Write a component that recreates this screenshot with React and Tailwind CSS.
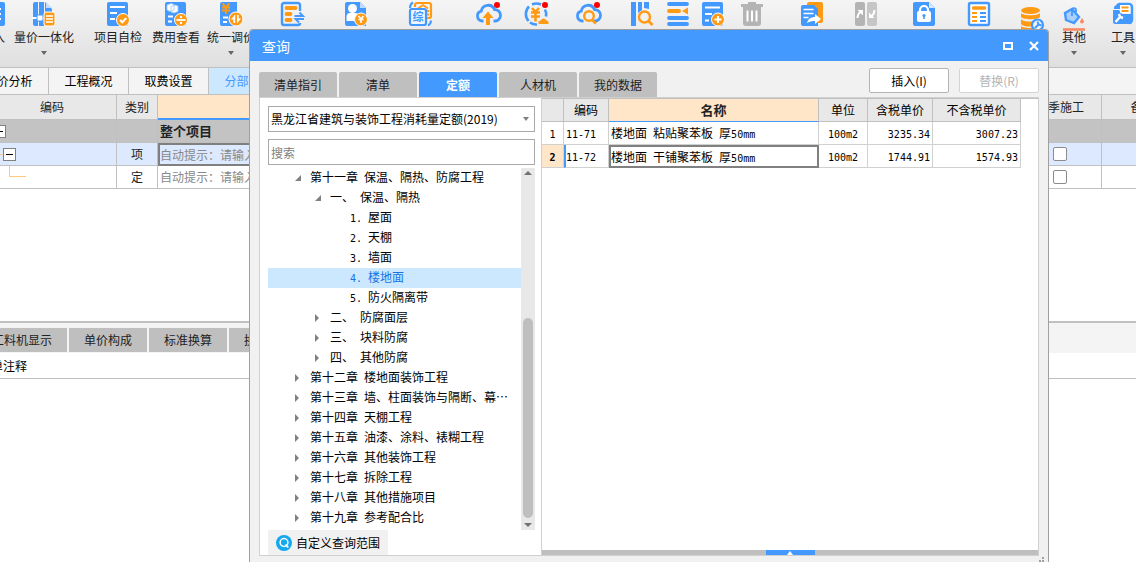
import React, { useState } from 'react';
import clsx from 'clsx';

const BLUE = '#4499ff';
const ORANGE = '#ff9a15';

/* ---------- toolbar icons ---------- */

function Icon({ children }) {
  return (
    <svg width="24" height="24" viewBox="0 0 24 24" fill="none" className="block shrink-0 overflow-visible" aria-hidden="true">
      {children}
    </svg>
  );
}

const Cloud = () => (
  <path d="M7.5 19H6a5 5 0 0 1-.8-9.800A7 7 0 0 1 18.600 7.600 5.700 5.700 0 0 1 19 19h-1.500" stroke={BLUE} strokeWidth="2.800" />
);
const RedDot = () => <circle cx="21" cy="3" r="3" fill="#f00" />;

const icons = {
  import: (
    <Icon>
      <rect x="2" width="22" height="24" rx="2" fill={BLUE} />
      <path d="M15 7h5M15 12h5M15 17h5" stroke="#fff" strokeWidth="2" />
    </Icon>
  ),
  integrate: (
    <Icon>
      <path d="M1 2a2 2 0 0 1 2-2h3v24H3a2 2 0 0 1-2-2zM7 0h5v24H7z" fill={BLUE} />
      <path d="M13 0l7 7v3h-7z" fill={BLUE} />
      <path d="M14 0l6 6h-6z" fill="#bfdcff" />
      <path d="M0 16h13" stroke="#fff" strokeWidth="2" />
      <rect x="5" y="13" width="6" height="6" fill="#fff" stroke={BLUE} />
      <rect x="12" y="10" width="11" height="14" rx="2" fill={ORANGE} stroke="#fff" />
      <path d="M14 14h7M14 17h7M14 20h7" stroke="#fff" strokeWidth="1.5" />
    </Icon>
  ),
  check: (
    <Icon>
      <rect x="1" width="21" height="24" rx="2" fill={BLUE} />
      <path d="M4 5h15M4 11h7M4 17h5" stroke="#fff" strokeWidth="2" />
      <circle cx="17" cy="18" r="6.500" fill={ORANGE} stroke="#fff" />
      <path d="M14 18l2.300 2.300 4-4.300" stroke="#fff" strokeWidth="2" />
    </Icon>
  ),
  fee: (
    <Icon>
      <rect x="1" width="21" height="24" rx="2" fill={BLUE} />
      <path d="M3 3l4-1.500 3 1V8L6 9.500 3 8zM7 4.500l4-1.500 3 1v5.500L10 11l-3-1z" fill="#fff" stroke="#9cc9ff" strokeWidth=".8" />
      <path d="M4 14.500h5M4 19.500h4" stroke="#fff" strokeWidth="2" />
      <circle cx="17" cy="18" r="6.500" fill={ORANGE} stroke="#fff" />
      <path d="M12.500 18h9" stroke="#fff" strokeWidth="1.800" />
      <circle cx="17" cy="15" r="1.200" fill="#fff" />
      <circle cx="17" cy="21" r="1.200" fill="#fff" />
    </Icon>
  ),
  adjust: (
    <Icon>
      <path d="M1 2a2 2 0 0 1 2-2h15v24H3a2 2 0 0 1-2-2z" fill={BLUE} />
      <path d="M3.500 1.500L7 5.500l3.500-4M3 5.500h8M3 8.500h8M7 5v7" stroke={ORANGE} strokeWidth="1.900" />
      <path d="M4 15.500h5M4 20h4" stroke="#fff" strokeWidth="1.800" />
      <circle cx="17" cy="17" r="7" fill={ORANGE} stroke="#fff" />
      <path d="M16.200 12.500v8.500h-1.700v-3.500H12zM18 21.500V13h1.700v3.500H22z" fill="#fff" />
    </Icon>
  ),
  convert: (
    <Icon>
      <path d="M20 9V3a2 2 0 0 0-2-2H4a2 2 0 0 0-2 2v18a2 2 0 0 0 2 2h14a2 2 0 0 0 2-2" stroke={BLUE} strokeWidth="2.400" />
      <path d="M6.500 6h9M6.500 12h4M6.500 18h4" stroke={ORANGE} strokeWidth="3.800" strokeLinecap="round" />
      <path d="M14 10h10v9H14z" fill="#efefef" />
      <path d="M14.500 14h8.500l-3.500-3.500M24 17h-8.500l3.500 3.500" stroke={BLUE} strokeWidth="1.900" />
    </Icon>
  ),
  person: (
    <Icon>
      <path d="M1 2a2 2 0 0 1 2-2h13l6 6v18H3a2 2 0 0 1-2-2z" fill={BLUE} />
      <path d="M16 0l6 6h-6z" fill="#bfdcff" />
      <circle cx="8.500" cy="6.500" r="4.500" fill="#fff" />
      <path d="M2.500 19v-4.500C2.500 12 4 11 6 11h5c2.500 0 3.500 1.500 3.500 3.500V19z" fill="#fff" />
      <circle cx="17" cy="17.500" r="6.500" fill={ORANGE} stroke="#fff" />
      <path d="M14.500 14l2.500 3 2.500-3M14.500 17.500h5M17 17v4" stroke="#fff" strokeWidth="1.600" />
    </Icon>
  ),
  summary: (
    <Icon>
      <path d="M7 5V3a2 2 0 0 1 2-2h12a2 2 0 0 1 2 2v11a2 2 0 0 1-2 2h-2" stroke={ORANGE} strokeWidth="2.200" />
      <path d="M10 6.500L15 3l5 3.500M19 9h2M19 12.500h2" stroke={ORANGE} strokeWidth="1.800" />
      <path d="M2 6c0-3 1-4.500 3-5.500M20 23.500c2-1 3-2.500 3-5" stroke={BLUE} strokeWidth="2" />
      <rect x="2" y="7" width="16" height="16" rx="2" fill="#eef5ff" stroke={BLUE} strokeWidth="2.200" />
      <text x="10" y="19" textAnchor="middle" fontSize="11" fontWeight="700" fontFamily="'Noto Sans CJK SC', sans-serif" fill={BLUE}>综</text>
    </Icon>
  ),
  upload: (
    <Icon>
      <Cloud />
      <path d="M12 9.500l5.500 6.500h-3.500v7h-4v-7H6.500z" fill={ORANGE} />
      <RedDot />
    </Icon>
  ),
  price: (
    <Icon>
      <path d="M4.500 19A10.500 10.500 0 0 1 5 4.500M8 2.500a10.500 10.500 0 0 1 9 0M21 7.500a10.500 10.500 0 0 1 1 7M6 20.500a10.500 10.500 0 0 0 7 2" stroke={BLUE} strokeWidth="2.600" />
      <path d="M8 6l3.500 4L15 6M7 10.500h9M7 14.500h9M11.500 10v9.500" stroke={ORANGE} strokeWidth="2.600" />
      <path d="M14.500 22v-2.500l2.500-1.500a2.800 2.800 0 0 1 5 0l2.500 1.500V22z" fill={ORANGE} />
      <RedDot />
    </Icon>
  ),
  cloudSearch: (
    <Icon>
      <Cloud />
      <circle cx="13" cy="14" r="4.800" fill="#f1f1f1" stroke={ORANGE} strokeWidth="2.400" />
      <path d="M16 18l4 3.500" stroke={ORANGE} strokeWidth="2.600" />
      <RedDot />
    </Icon>
  ),
  lookup: (
    <Icon>
      <path d="M1 0h5v24H1zM8 0h4v8l-4 3zM14 0h5v7l-5-1z" fill={BLUE} />
      <circle cx="14.500" cy="15" r="5.500" fill="#f1f1f1" stroke={ORANGE} strokeWidth="2.400" />
      <path d="M18.500 19l4 4" stroke={ORANGE} strokeWidth="2.600" />
    </Icon>
  ),
  insertRow: (
    <Icon>
      <path d="M3 2h18M3 16h18M3 22h18" stroke={BLUE} strokeWidth="3.800" strokeLinecap="round" />
      <path d="M3 9h10" stroke={ORANGE} strokeWidth="4" strokeLinecap="round" />
      <path d="M22 5.500v7L16 9z" fill={ORANGE} />
    </Icon>
  ),
  add: (
    <Icon>
      <rect width="21" height="24" rx="2" fill={BLUE} />
      <path d="M3 5.500h15M3 12h7M3 18.500h4" stroke="#fff" strokeWidth="1.800" />
      <circle cx="16" cy="17.500" r="6.500" fill={ORANGE} stroke="#fff" />
      <path d="M12.500 17.500h7M16 14v7" stroke="#fff" strokeWidth="2" />
    </Icon>
  ),
  remove: (
    <Icon>
      <path d="M1 2h7V0h8v2h7v3H1zM3 5h18v16a3 3 0 0 1-3 3H6a3 3 0 0 1-3-3z" fill="#b4b4b4" />
      <path d="M7.500 8.500v11M12 8.500v11M16.500 8.500v11" stroke="#fff" strokeWidth="2" />
    </Icon>
  ),
  copy: (
    <Icon>
      <rect x="7" width="16" height="21" rx="2" fill={ORANGE} />
      <path d="M1 5a2 2 0 0 1 2-2h11l4 4v17H3a2 2 0 0 1-2-2z" fill={BLUE} />
      <path d="M3.500 7.500h10M3.500 11.500h10M3.500 15.500h5" stroke="#fff" strokeWidth="1.600" />
      <path d="M7 21c1-4 4-6 8-6v-3l6 5-6 5v-3c-3 0-5 .5-8 2z" fill="#fff" />
    </Icon>
  ),
  swap: (
    <Icon>
      <rect x="1" width="10" height="24" rx="2" fill="#b4b4b4" />
      <rect x="13" width="10" height="24" rx="2" fill="#c6c6c6" />
      <path d="M3.500 16c0-3 .8-4.500 3-6M20.500 8c0 3-.8 4.500-3 6" stroke="#fff" strokeWidth="2" />
      <path d="M3.500 8H9v5.500zM20.500 16H15v-5.500z" fill="#fff" />
    </Icon>
  ),
  lock: (
    <Icon>
      <path d="M1 2a2 2 0 0 1 2-2h14l6 6v16a2 2 0 0 1-2 2H3a2 2 0 0 1-2-2z" fill={BLUE} />
      <path d="M17 0l6 6h-6z" fill="#d5e8ff" />
      <rect x="5" y="9" width="14" height="11" rx="2" fill="#fff" />
      <path d="M8 10V8a4 4 0 0 1 8 0v2" stroke="#fff" strokeWidth="2.200" />
      <circle cx="12" cy="13.500" r="1.600" fill={BLUE} />
      <path d="M12 13v4" stroke={BLUE} strokeWidth="1.600" />
    </Icon>
  ),
  list: (
    <Icon>
      <rect x="2" y="1" width="20" height="22" rx="1.500" fill="#fff" stroke={BLUE} strokeWidth="2.400" />
      <path d="M6.500 6h11" stroke={ORANGE} strokeWidth="3.600" strokeLinecap="round" />
      <path d="M5 11h5M5 15h5M5 19h5" stroke={ORANGE} strokeWidth="2" />
      <path d="M13 11h6M13 15h6M13 19h6" stroke={BLUE} strokeWidth="2" />
    </Icon>
  ),
  database: (
    <Icon>
      <ellipse cx="10.500" cy="8.500" rx="9.500" ry="3.500" fill={ORANGE} />
      <path d="M1 11c2 3 17 3 19 0v4c-2 3-17 3-19 0zM1 17c2 3 12 3 14 2v5c-4 1-12 1-14-2zM1 24c2 2 8 2 12 2v4H1z" fill={ORANGE} />
      <circle cx="17.500" cy="23" r="5.500" fill="#eef5ff" stroke={BLUE} strokeWidth="2.200" />
      <path d="M15 26l3.500-3.500m-1-3l1 3 3 1" stroke={BLUE} strokeWidth="2" />
    </Icon>
  ),
  paint: (
    <Icon>
      <path d="M3 11l7-4 7 8-5 6-8-3z" fill="#a9d1ff" stroke={BLUE} strokeWidth="2.400" />
      <path d="M10 14V8c0-2.500 4-2.500 4 0v2" stroke={BLUE} strokeWidth="1.800" />
      <path d="M20 16l1.800 3a1.900 1.900 0 1 1-3.600 0z" fill="#fb8763" />
      <path d="M1 27.500h22" stroke="#fb8763" strokeWidth="2.600" />
    </Icon>
  ),
  tools: (
    <Icon>
      <path d="M8 2h10a3 3 0 0 1 3 3v13a3 3 0 0 1-3 3" stroke={BLUE} strokeWidth="2.400" />
      <path d="M3 5l4-4h2v6H3zM2 8h6l3 4h10v8a2 2 0 0 1-2 2H4a2 2 0 0 1-2-2z" fill={BLUE} />
      <rect x="9" y="3" width="10" height="8" rx="1" fill="#fff" />
      <path d="M10.500 5.500h7M10.500 9h7" stroke={ORANGE} strokeWidth="2" />
      <path d="M4.500 20l4.500-5m-1-3l1 3 3 1" stroke="#fff" strokeWidth="2.400" />
    </Icon>
  ),
};

const toolbar = [
  { icon: 'import', label: '入', name: '导入', space: '-ml-[19px] items-end' },
  { icon: 'integrate', label: '量价一体化', menu: true, space: 'ml-[9px] items-center' },
  { icon: 'check', label: '项目自检', space: 'ml-5 items-center' },
  { icon: 'fee', label: '费用查看', space: 'ml-2.5 items-center' },
  { icon: 'adjust', label: '统一调价', menu: true, space: 'ml-[7px] items-center' },
  { icon: 'convert', name: '转换', space: 'ml-[25px]' },
  { icon: 'person', name: '人工', space: 'ml-10' },
  { icon: 'summary', name: '综合', space: 'ml-10' },
  { icon: 'upload', name: '上传', space: 'ml-11' },
  { icon: 'price', name: '信息价', space: 'ml-6' },
  { icon: 'cloudSearch', name: '云检查', space: 'ml-7' },
  { icon: 'lookup', name: '查询', space: 'ml-[30px]' },
  { icon: 'insertRow', name: '插入', space: 'ml-3' },
  { icon: 'add', name: '补充', space: 'ml-3' },
  { icon: 'remove', name: '删除', space: 'ml-3.5' },
  { icon: 'copy', name: '复用', space: 'ml-9' },
  { icon: 'swap', name: '替换', space: 'ml-[30px]' },
  { icon: 'lock', name: '锁定', space: 'ml-[34px]' },
  { icon: 'list', name: '清单', space: 'ml-[31px]' },
  { icon: 'database', name: '数据', space: 'ml-[29px]' },
  { icon: 'paint', label: '其他', menu: true, space: 'ml-[18px] items-center' },
  { icon: 'tools', label: '工具', menu: true, space: 'ml-[25px] items-center' },
];

function Toolbar() {
  return (
    <header className="flex h-[68px] overflow-hidden border-b border-[#c0c0c0] bg-linear-to-b from-[#f5f5f5] to-[#dfdfdf] pt-0.5">
      {toolbar.map((t) => (
        <button key={t.icon} aria-label={t.name} className={clsx('flex shrink-0 flex-col', t.space)}>
          {icons[t.icon]}
          {t.label && <span className="mt-[3px] whitespace-nowrap text-xs leading-4 text-[#222]">{t.label}</span>}
          {t.menu && <Caret className="mt-1.5 text-[#666]" />}
        </button>
      ))}
    </header>
  );
}

function Caret({ className, up }) {
  return (
    <svg width="6" height="4" viewBox="0 0 6 4" className={clsx('block shrink-0', className)} aria-hidden="true">
      <path d={up ? 'M0 4l3-4 3 4z' : 'M0 0h6L3 4z'} fill="currentColor" />
    </svg>
  );
}

/* Latin runs are set in a half-width mono face, two to a Chinese character */
function Mixed({ children }) {
  return children.split(/([\x20-\x7e]+)/).map((part, i) =>
    i % 2 ? (
      <span key={i} className="whitespace-pre font-['DejaVu_Sans_Mono',monospace] text-[10px] leading-none">{part}</span>
    ) : part
  );
}

/* ---------- main window ---------- */

const mainTabs = ['造价分析', '工程概况', '取费设置', '分部分项'];

function MainTabs() {
  return (
    <nav className="flex h-[27px] overflow-hidden border-b border-[#c0c0c0] bg-[#f4f4f4]">
      {mainTabs.map((tab, i) => (
        <button
          key={tab}
          className={clsx(
            'w-20 shrink-0 border-r border-[#c0c0c0] text-xs',
            i === 0 && '-ml-[31px]',
            i === 3 ? 'bg-[#cce8ff] text-[#4499ff]' : 'text-black'
          )}
        >
          {tab}
        </button>
      ))}
    </nav>
  );
}

function Expander() {
  return (
    <button aria-label="折叠" className="flex size-[13px] shrink-0 items-center justify-center border border-[#808080] bg-white">
      <span className="h-px w-[7px] bg-black" />
    </button>
  );
}

function BillGrid() {
  const cell = 'border-r border-b border-[#c0c0c0] p-0';
  return (
    <div className="-ml-3 -mr-12">
      <table className="w-full table-fixed border-separate border-spacing-0 text-xs leading-4 text-[#222]">
        <colgroup>
          <col className="w-[129px]" />
          <col className="w-[41px]" />
          <col />
          <col className="w-[83px]" />
          <col className="w-[82px]" />
        </colgroup>
        <thead>
          <tr className="h-[25px] bg-[#e8e8e8]">
            <th className={clsx(cell, 'font-normal')}>编码</th>
            <th className={clsx(cell, 'font-normal')}>类别</th>
            <th aria-label="名称" className="border-r border-b-2 border-r-[#c0c0c0] border-b-[#4499ff] bg-[#ffe6c8] p-0" />
            <th className={clsx(cell, 'font-normal')}>冬季施工</th>
            <th className={clsx(cell, 'font-normal')}>备注</th>
          </tr>
        </thead>
        <tbody>
          <tr className="h-[23px] bg-[#c3c3c3]">
            <td className={clsx(cell, 'pl-[5px]')}><Expander /></td>
            <td className={cell} />
            <td className={clsx(cell, 'pl-0.5 text-[13px] font-bold')}>整个项目</td>
            <td className={cell} />
            <td className={cell} />
          </tr>
          <tr className="h-[23px] bg-[#dde9fe]">
            <td className={cell}>
              <div className="flex items-center">
                <span className="h-px w-[15px] bg-[#ffc87d]" />
                <Expander />
              </div>
            </td>
            <td className={clsx(cell, 'text-center')}>项</td>
            <td className="border-2 border-[#808080] p-0 text-[#888]">自动提示：请输入</td>
            <td className={cell}><GridCheck label="冬季施工 项" /></td>
            <td className={cell} />
          </tr>
          <tr className="h-[23px] bg-white">
            <td className={cell}>
              <div className="ml-[21px] h-[22px] w-[17px]">
                <div className="h-[11px] border-b border-l border-[#ffc87d]" />
              </div>
            </td>
            <td className={clsx(cell, 'text-center')}>定</td>
            <td className={clsx(cell, 'pl-0.5 text-[#888]')}>自动提示：请输入</td>
            <td className={cell}><GridCheck label="冬季施工 定" /></td>
            <td className={cell} />
          </tr>
        </tbody>
      </table>
    </div>
  );
}

function GridCheck({ label }) {
  return (
    <input
      type="checkbox"
      aria-label={label}
      className="mx-auto block size-3.5 appearance-none rounded-xs border border-[#8c8c8c] bg-white checked:bg-[#4499ff]"
    />
  );
}

const detailTabs = ['工料机显示', '单价构成', '标准换算', '换算信息'];

function DetailPanel() {
  return (
    <section className="flex-1 border-t-2 border-[#c0c0c0]">
      <div className="flex h-[30px] items-end gap-0.5 overflow-hidden bg-[#f4f4f4] pb-px">
        {detailTabs.map((tab, i) => (
          <button
            key={tab}
            className={clsx('h-6 shrink-0 bg-[#bfbfbf] text-xs text-[#222]', i === 0 ? '-ml-[23px] w-[90px]' : 'w-[78px]')}
          >
            {tab}
          </button>
        ))}
      </div>
      <div className="border-b border-[#c0c0c0]">
        <p className="-ml-[21px] py-1 text-xs leading-[17px] text-black">清单注释</p>
      </div>
    </section>
  );
}

/* ---------- query dialog ---------- */

const tree = [
  { code: '第十一章', name: '保温、隔热、防腐工程', level: 0, open: true },
  { code: '一、', name: '保温、隔热', level: 1, open: true },
  { code: '1.', name: '屋面', level: 2 },
  { code: '2.', name: '天棚', level: 2 },
  { code: '3.', name: '墙面', level: 2 },
  { code: '4.', name: '楼地面', level: 2 },
  { code: '5.', name: '防火隔离带', level: 2 },
  { code: '二、', name: '防腐面层', level: 1 },
  { code: '三、', name: '块料防腐', level: 1 },
  { code: '四、', name: '其他防腐', level: 1 },
  { code: '第十二章', name: '楼地面装饰工程', level: 0 },
  { code: '第十三章', name: '墙、柱面装饰与隔断、幕…', level: 0 },
  { code: '第十四章', name: '天棚工程', level: 0 },
  { code: '第十五章', name: '油漆、涂料、裱糊工程', level: 0 },
  { code: '第十六章', name: '其他装饰工程', level: 0 },
  { code: '第十七章', name: '拆除工程', level: 0 },
  { code: '第十八章', name: '其他措施项目', level: 0 },
  { code: '第十九章', name: '参考配合比', level: 0 },
];

const indent = ['pl-[27px]', 'pl-[47px]', 'pl-[82px]'];

function QuotaTree() {
  const [selected, setSelected] = useState('楼地面');

  return (
    <div className="mt-[3px] flex min-h-0 flex-1">
      <ul className="min-w-0 flex-1 overflow-hidden">
        {tree.map((node) => (
          <li key={node.code}>
            <button
              onClick={() => setSelected(node.name)}
              className={clsx(
                'flex h-5 w-full items-center whitespace-nowrap pb-0.5 text-xs leading-4',
                indent[node.level],
                node.name === selected ? 'bg-[#cce8ff] text-[#1673e6]' : 'text-black'
              )}
            >
              {node.level < 2 && (
                <svg width="15" height="8" viewBox="0 0 15 8" className="mt-0.5 shrink-0" aria-hidden="true">
                  <path d={node.open ? 'M6 1v6H0z' : 'M0 0l4 4-4 4z'} fill="#808080" />
                </svg>
              )}
              <span className="mr-1.5"><Mixed>{node.code}</Mixed></span>
              <span>{node.name}</span>
            </button>
          </li>
        ))}
      </ul>
      <div className="flex w-3.5 flex-col items-center bg-[#e8e8e8] py-[3px] text-[#707078]">
        <svg width="8" height="4" viewBox="0 0 8 4" aria-hidden="true"><path d="M0 4l4-4 4 4z" fill="currentColor" /></svg>
        <div className="mt-[143px] w-2.5 flex-1 rounded-full bg-[#bfbfbf]" />
        <svg width="8" height="4" viewBox="0 0 8 4" className="mt-[5px]" aria-hidden="true"><path d="M0 0h8L4 4z" fill="currentColor" /></svg>
      </div>
    </div>
  );
}

function SearchPane() {
  return (
    <div className="flex w-[282px] shrink-0 flex-col border-r border-[#d0d0d0] pt-2 pr-1.5 pl-2">
      <div className="relative">
        <select
          aria-label="定额库"
          className="block h-[26px] w-full appearance-none border border-[#a9a9a9] bg-white pl-0.5 text-xs text-black"
        >
          <option>黑龙江省建筑与装饰工程消耗量定额(2019)</option>
        </select>
        <Caret className="pointer-events-none absolute top-[11px] right-1.5 text-[#808080]" />
      </div>
      <input
        aria-label="搜索"
        placeholder="搜索"
        className="mt-[7px] h-[26px] w-full border border-[#a9a9a9] bg-white px-0.5 text-xs text-black placeholder:text-[#808080]"
      />
      <QuotaTree />
      <button className="flex h-[25px] w-[120px] items-center gap-1 bg-[#f1f1f1] pl-2 text-xs text-black">
        <svg width="16" height="16" viewBox="0 0 16 16" fill="none" aria-hidden="true">
          <circle cx="8" cy="8" r="8" fill="#14a9ee" />
          <circle cx="8" cy="7.500" r="3.900" stroke="#fff" strokeWidth="1.500" />
          <path d="M9.500 9.500l2.800 3" stroke="#fff" strokeWidth="1.800" />
        </svg>
        自定义查询范围
      </button>
    </div>
  );
}

const quotas = [
  { code: '11-71', name: '楼地面 粘贴聚苯板 厚50mm', unit: '100m2', taxed: '3235.34', untaxed: '3007.23' },
  { code: '11-72', name: '楼地面 干铺聚苯板 厚50mm', unit: '100m2', taxed: '1744.91', untaxed: '1574.93' },
];

function QuotaTable() {
  const head = 'border-r border-b border-[#c0c0c0] p-0 font-normal';
  const cell = 'border-r border-b border-[#d0d0d0] p-0';

  return (
    <table className="w-[479px] table-fixed border-separate border-spacing-0 text-xs leading-4 text-black">
      <colgroup>
        <col className="w-[22px]" />
        <col className="w-[45px]" />
        <col />
        <col className="w-[49px]" />
        <col className="w-[65px]" />
        <col className="w-[88px]" />
      </colgroup>
      <thead>
        <tr className="h-[23px] bg-[#e8e8e8]">
          <th className={head} aria-label="序号" />
          <th className={head}>编码</th>
          <th className="border-r border-b border-r-[#c0c0c0] border-b-[#4499ff] bg-[#ffe6c8] p-0 text-[13px] font-bold text-[#222]">名称</th>
          <th className={head}>单位</th>
          <th className={head}>含税单价</th>
          <th className={head}>不含税单价</th>
        </tr>
      </thead>
      <tbody>
        {quotas.map((q, i) => {
          const active = i === 1;
          return (
            <tr key={q.code} className="h-[23px]">
              <td className={clsx(cell, 'text-center', active && 'bg-[#ffe6c8] font-bold')}><Mixed>{String(i + 1)}</Mixed></td>
              <td className={clsx(cell, active ? 'border-l-2 border-l-[#4499ff]' : 'pl-0.5')}><Mixed>{q.code}</Mixed></td>
              <td className={active ? 'border-2 border-[#808080] p-0' : clsx(cell, 'pl-0.5')}><Mixed>{q.name}</Mixed></td>
              <td className={clsx(cell, 'text-center')}><Mixed>{q.unit}</Mixed></td>
              <td className={clsx(cell, 'pr-0.5 text-right')}><Mixed>{q.taxed}</Mixed></td>
              <td className={clsx(cell, 'pr-0.5 text-right')}><Mixed>{q.untaxed}</Mixed></td>
            </tr>
          );
        })}
      </tbody>
    </table>
  );
}

const queryTabs = ['清单指引', '清单', '定额', '人材机', '我的数据'];

function QueryDialog() {
  const [tab, setTab] = useState('定额');

  return (
    <div
      role="dialog"
      aria-label="查询"
      className="absolute top-[29px] right-[87px] bottom-0 left-[249px] flex flex-col overflow-hidden rounded-t border border-b-0 border-[#a0a0a0] bg-[#f1f1f1]"
    >
      <div className="flex h-[31px] shrink-0 items-center bg-[#4499ff] pr-[9px] pl-3 text-white">
        <h1 className="flex-1 text-sm">查询</h1>
        <button aria-label="最大化" className="mr-4 h-2 w-2.5 border-2 border-white" />
        <button aria-label="关闭">
          <svg width="10" height="10" viewBox="0 0 10 10" aria-hidden="true">
            <path d="M1 1l8 8M9 1L1 9" stroke="#fff" strokeWidth="2.200" />
          </svg>
        </button>
      </div>

      <div className="flex h-9 shrink-0 items-end gap-0.5 px-[9px]">
        {queryTabs.map((t) => (
          <button
            key={t}
            onClick={() => setTab(t)}
            className={clsx(
              'h-[25px] w-[78px] rounded-t-xs text-xs',
              t === tab ? 'bg-[#4499ff] font-bold text-white' : 'bg-[#bfbfbf] text-[#222]'
            )}
          >
            {t}
          </button>
        ))}
        <div className="mb-1 ml-auto flex gap-2.5">
          <button className="h-[25px] w-20 rounded-xs border border-[#b4b4b4] bg-white text-xs text-black">插入(I)</button>
          <button disabled className="h-[25px] w-20 rounded-xs border border-[#d4d4d4] bg-white text-xs text-[#b4b4b4]">替换(R)</button>
        </div>
      </div>

      <div className="mx-[9px] flex min-h-0 flex-1 border border-[#d0d0d0] bg-white">
        <SearchPane />
        <div className="flex min-w-0 flex-1 flex-col">
          <div className="flex-1 border-t border-[#c0c0c0]">
            <QuotaTable />
          </div>
          <div className="flex h-[5px] justify-center bg-[#bfbfbf]">
            <button aria-label="展开" className="flex w-[49px] items-center justify-center bg-[#4499ff] text-white">
              <Caret up />
            </button>
          </div>
        </div>
      </div>

      <div className="flex h-1.5 shrink-0 items-end justify-end pr-1">
        <svg width="5" height="5" viewBox="0 0 5 5" fill="#a0a0a0" aria-hidden="true">
          <path d="M3 0h2v2H3zM0 3h2v2H0zM3 3h2v2H3z" />
        </svg>
      </div>
    </div>
  );
}

export default function App() {
  return (
    <div className="relative flex min-h-screen flex-col overflow-hidden bg-white font-['Noto_Sans_CJK_SC',sans-serif]">
      <Toolbar />
      <MainTabs />
      <main className="flex flex-1 flex-col">
        <div className="min-h-[226px]">
          <BillGrid />
        </div>
        <DetailPanel />
      </main>
      <QueryDialog />
    </div>
  );
}
